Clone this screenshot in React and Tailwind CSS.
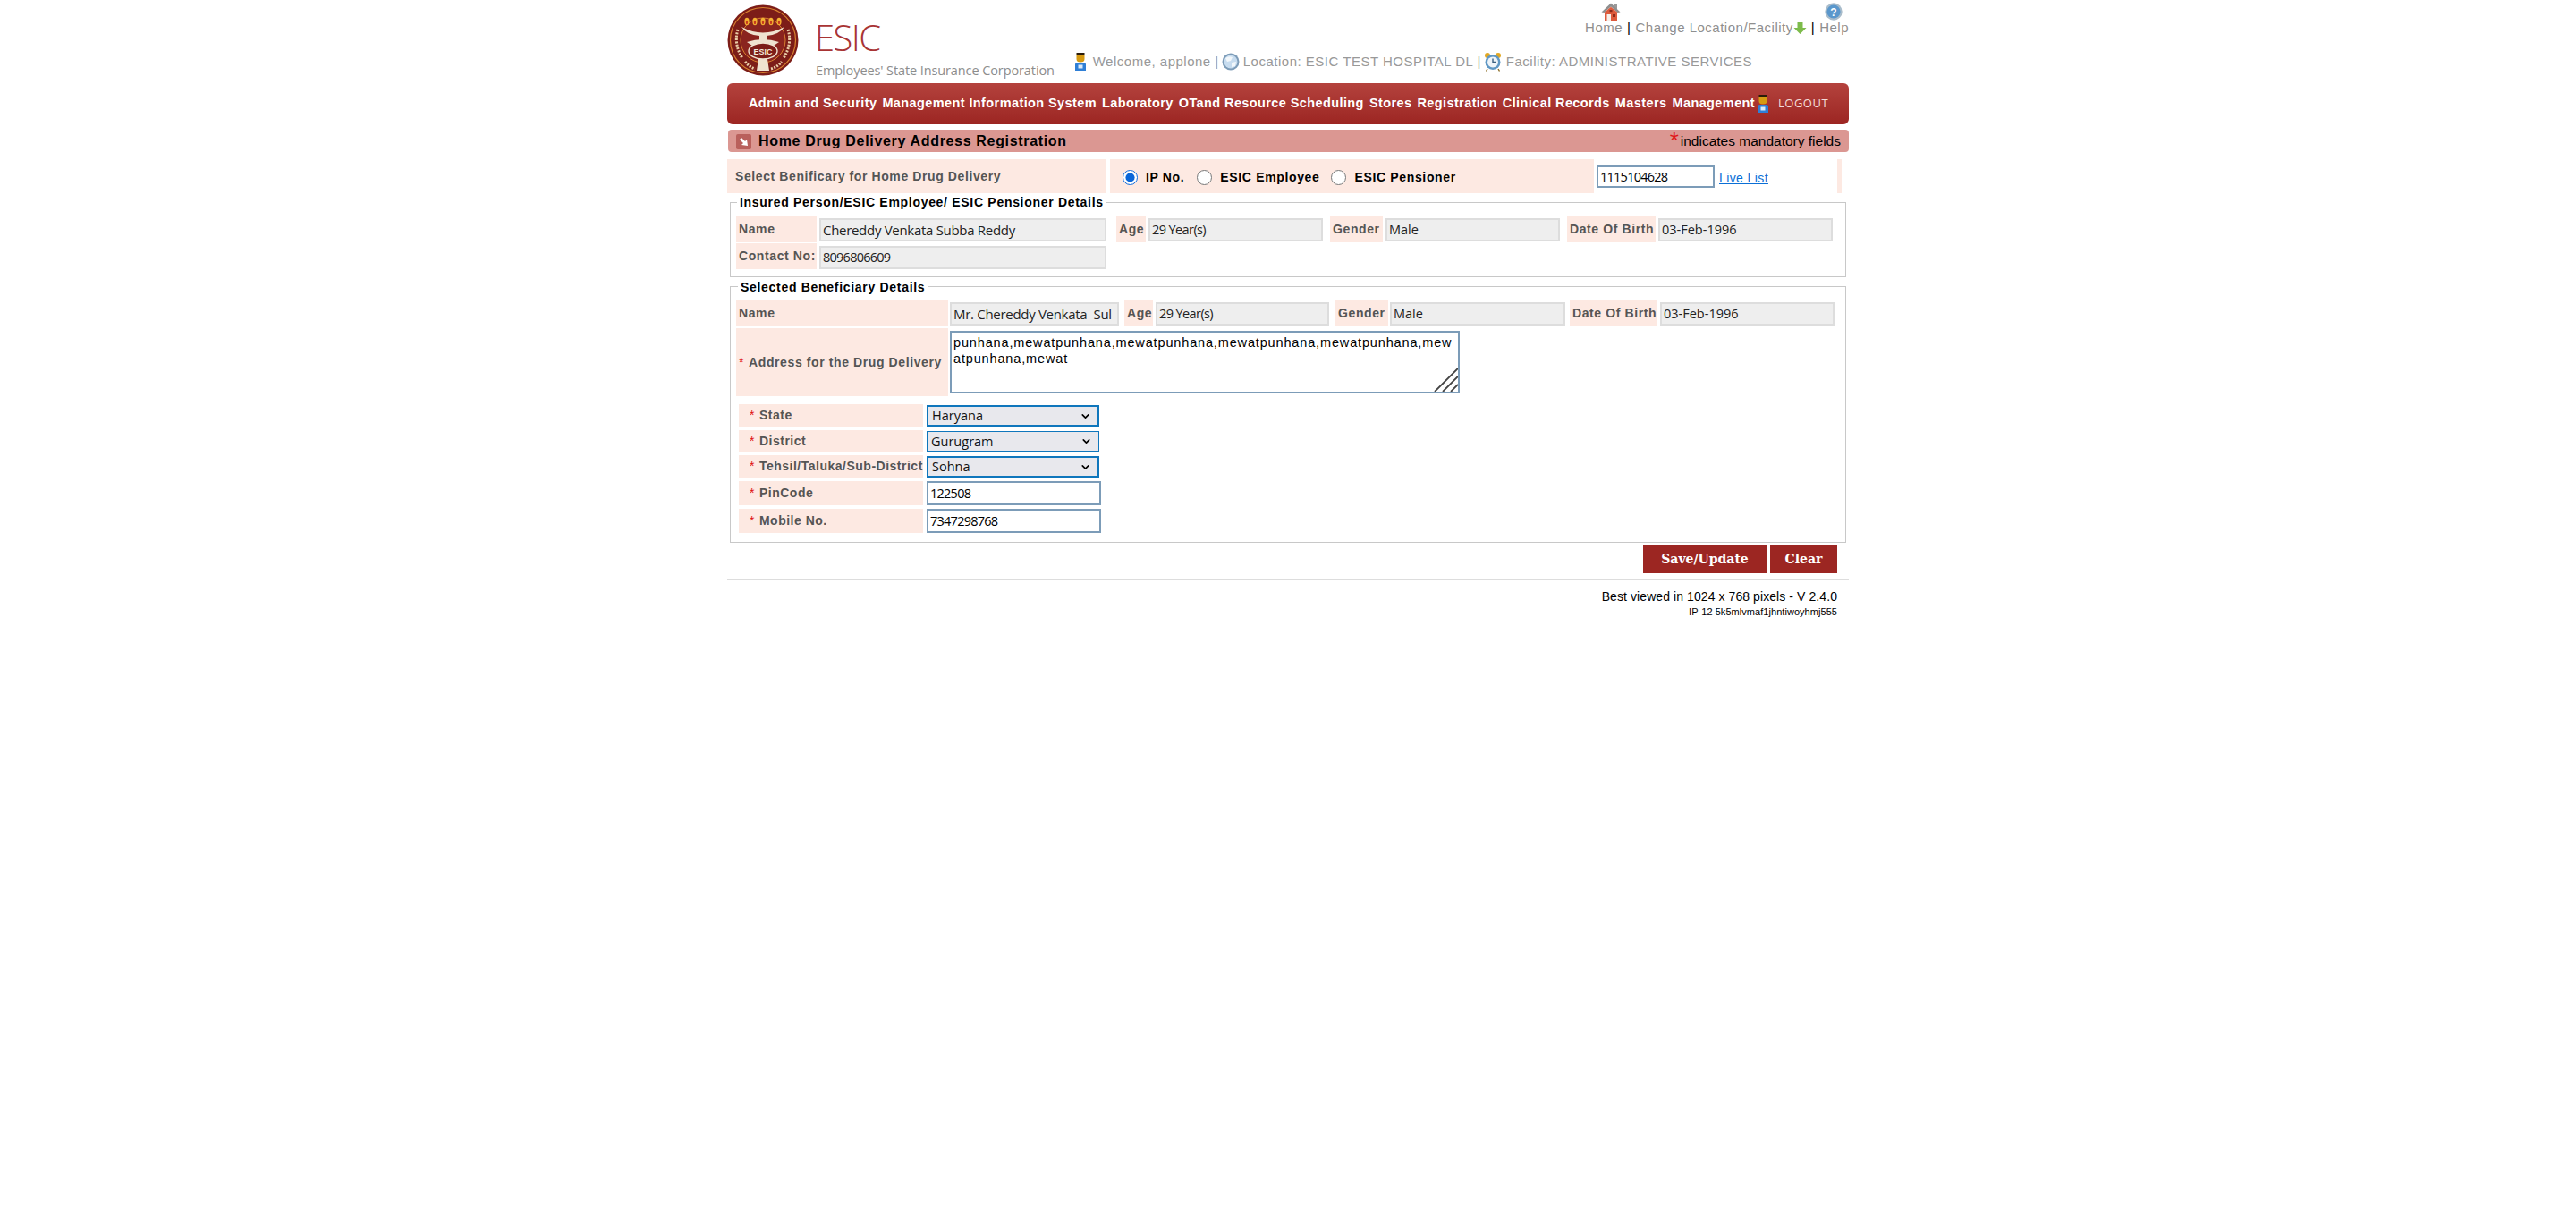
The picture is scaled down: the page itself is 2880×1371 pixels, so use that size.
import { ChevronDown } from 'lucide-react'

const sans = "font-['Liberation_Sans',Arial,sans-serif]"

function EsicLogo() {
  return (
    <svg viewBox="0 0 80 80" className="h-[80px] w-[80px]">
      <circle cx="40" cy="40" r="39.5" fill="#7c1d18" />
      <circle cx="40" cy="40" r="36.5" fill="none" stroke="#d9822f" strokeWidth="1.2" />
      <circle cx="40" cy="40" r="25" fill="#8a241e" stroke="#d9822f" strokeWidth="1" />
      {[22, 31, 40, 49, 58].map((x) => (
        <g key={x}>
          <ellipse cx={x} cy="19" rx="2.6" ry="4.2" fill="#f4b233" />
          <ellipse cx={x} cy="20" rx="1.2" ry="2.2" fill="#c63c1c" />
        </g>
      ))}
      <path d="M16 25 Q40 38 64 25 Q58 34 44 35 L44 40 L36 40 L36 35 Q22 34 16 25Z" fill="#efe3d0" />
      <path d="M22 42 Q40 36 58 42 L52 46 Q40 42 28 46Z" fill="#efe3d0" />
      <ellipse cx="40" cy="52" rx="16" ry="9" fill="#7c1d18" stroke="#efe3d0" strokeWidth="1.4" />
      <text x="40" y="56" textAnchor="middle" fontSize="9" fontWeight="700" fill="#f3e8d8" fontFamily="Liberation Sans">ESIC</text>
      <path d="M35 61 L45 61 L47 74 L33 74Z" fill="#efe3d0" />
      <path d="M12 28 Q7 44 17 60" fill="none" stroke="#e9cfa8" strokeWidth="3" strokeDasharray="2 1.4" />
      <path d="M68 28 Q73 44 63 60" fill="none" stroke="#e9cfa8" strokeWidth="3" strokeDasharray="2 1.4" />
      <path d="M20 64 Q25 70 31 72" fill="none" stroke="#e9cfa8" strokeWidth="3" strokeDasharray="2 1.4" />
      <path d="M49 72 Q56 70 61 64" fill="none" stroke="#e9cfa8" strokeWidth="3" strokeDasharray="2 1.4" />
    </svg>
  )
}

function HomeIcon() {
  return (
    <svg viewBox="0 0 22 20" className="h-[20px] w-[22px]">
      <rect x="15" y="1.5" width="3" height="6" fill="#9a9a9a" />
      <path d="M11 0.5 L21.5 10.5 L18.5 11 L11 4.5 L3.5 11 L0.5 10.5Z" fill="#8f8f8f" />
      <path d="M4 10.5 L11 4.8 L18 10.5 L18 20 L4 20Z" fill="#dd5a3c" />
      <rect x="6.5" y="13" width="4.5" height="7" fill="#f6eee8" />
      <rect x="13" y="13" width="3" height="3" fill="#8e2b1a" />
      <rect x="9.5" y="8" width="3" height="2.2" fill="#8e2b1a" />
    </svg>
  )
}

function HelpIcon() {
  return (
    <svg viewBox="0 0 20 20" className="h-[20px] w-[20px]">
      <circle cx="10" cy="10" r="9.7" fill="#a9bccb" />
      <circle cx="10" cy="10" r="7.6" fill="#5a97cc" />
      <text x="10" y="14.5" textAnchor="middle" fontSize="12" fontWeight="700" fill="#fff" fontFamily="Liberation Sans">?</text>
    </svg>
  )
}

function DownArrow() {
  return (
    <svg viewBox="0 0 15 15" className="h-[15px] w-[15px] shrink-0">
      <path d="M4.5 1 H10.5 V7 H14.5 L7.5 14 L0.5 7 H4.5Z" fill="#7dbb4b" />
    </svg>
  )
}

function UserIcon({ className }) {
  return (
    <svg viewBox="0 0 14 22" className={className}>
      <rect x="2.5" y="1" width="9" height="3" fill="#2a1c0a" />
      <path d="M2.5 3 H11.5 V8 Q11.5 11.5 7 11.5 Q2.5 11.5 2.5 8Z" fill="#d69a12" />
      <path d="M1 14 Q1 12 4 12 H10 Q13 12 13 14 V21 H1Z" fill="#2f7fd6" />
      <rect x="4.5" y="14.5" width="5" height="4" fill="#dcebfa" />
    </svg>
  )
}

function GlobeIcon() {
  return (
    <svg viewBox="0 0 20 20" className="h-[20px] w-[20px] shrink-0">
      <circle cx="10" cy="10" r="9.5" fill="#7d9cb8" />
      <circle cx="10" cy="10" r="7.5" fill="#c7dcef" />
      <path d="M4 6 Q8 3 12 5 L10 9 L6 10Z" fill="#f2f7fb" />
      <path d="M11 11 L16 10 L15 15 L11 16Z" fill="#f2f7fb" />
    </svg>
  )
}

function ClockIcon() {
  return (
    <svg viewBox="0 0 20 22" className="h-[22px] w-[20px] shrink-0">
      <circle cx="4" cy="4" r="3" fill="#e2a823" />
      <circle cx="16" cy="4" r="3" fill="#e2a823" />
      <circle cx="10" cy="11.5" r="8.5" fill="#5f97c4" />
      <circle cx="10" cy="11.5" r="6" fill="#eef4f9" />
      <path d="M10 7.5 V11.5 H13" fill="none" stroke="#3a5f80" strokeWidth="1.4" />
      <path d="M4 19 L2.5 21.5 M16 19 L17.5 21.5" stroke="#8a6a20" strokeWidth="1.4" />
    </svg>
  )
}

function TitleIcon() {
  return (
    <svg viewBox="0 0 17 17" className="h-[17px] w-[17px] shrink-0">
      <rect width="17" height="17" rx="2" fill="#b9605c" />
      <path d="M4 6 L6 4 L10 8 L12 6 L13 13 L6 12 L8 10Z" fill="#fff" />
    </svg>
  )
}

function Label({ className = '', children }) {
  return (
    <div className={`flex shrink-0 items-center bg-[#fde9e2] pl-[3px] text-[14px] font-bold tracking-[0.6px] text-[#555] ${className}`}>
      {children}
    </div>
  )
}

function ReadOnly({ className = '', children }) {
  return (
    <div className={`flex h-[26px] shrink-0 items-center whitespace-pre border-2 border-[#ddd] bg-[#eee] pl-[2px] font-['Open_Sans',sans-serif] text-[14.5px] text-[#222] ${className}`}>
      {children}
    </div>
  )
}

function Req() {
  return <span className="mr-[5px] font-normal text-[#e01010]">*</span>
}

function Legend({ className = '', children }) {
  return (
    <div className={`absolute bg-white px-[3px] text-[14px] font-bold tracking-[0.7px] text-black ${className}`}>
      {children}
    </div>
  )
}

function SelectBox({ className = '', children }) {
  return (
    <div className={`flex w-[193px] items-center justify-between border-[#0f76bc] bg-[#e8e8ed] pl-[4px] pr-[7px] font-['Open_Sans',sans-serif] text-[14.5px] text-[#111] ${className}`}>
      {children}
      <ChevronDown className="h-[13px] w-[13px] text-black" strokeWidth={3} />
    </div>
  )
}

function Radio({ checked, label, className = '' }) {
  return (
    <label className={`flex items-center gap-[9px] ${className}`}>
      <input type="radio" name="ben" defaultChecked={checked} className="m-0 h-[17px] w-[17px] accent-[#0a66d8]" />
      <span className="text-[14px] font-bold tracking-[0.65px] text-black">{label}</span>
    </label>
  )
}

function FormRow({ label, children, className = '' }) {
  return (
    <div className={`flex items-stretch gap-[4px] ${className}`}>
      <div className="flex w-[206px] shrink-0 items-center whitespace-nowrap bg-[#fde9e2] pl-[12px] text-[14px] font-bold tracking-[0.5px] text-[#555]">
        <Req />
        {label}
      </div>
      {children}
    </div>
  )
}

function TextBox({ children }) {
  return (
    <div className="flex w-[195px] items-center border-2 border-[#7c9cb8] bg-white pl-[2px] font-['Open_Sans',sans-serif] text-[14.5px] tracking-[-0.75px] text-black">
      {children}
    </div>
  )
}

export default function App() {
  return (
    <div className={`min-h-[1371px] bg-white ${sans}`}>
      <div className="mx-auto w-[1254px]">
        {/* Header */}
        <div className="flex h-[93px] pt-[5px]">
          <EsicLogo />
          <div className="ml-[19px] flex w-[268px] shrink-0 flex-col">
            <div className="ml-[-1px] mt-[12px] font-['Open_Sans',sans-serif] text-[40px] font-light leading-[50px] tracking-[-1.6px] text-[#a83434]">ESIC</div>
            <div className="mt-[3px] whitespace-nowrap font-['Open_Sans',sans-serif] text-[14.5px] leading-[18px] tracking-[-0.1px] text-[#8d8d8d]">
              Employees' State Insurance Corporation
            </div>
          </div>
          <div className="flex flex-1 flex-col items-end">
            <div className="flex w-full justify-end pr-[7px]">
              <div className="mr-[228px] mt-[-2px]"><HomeIcon /></div>
              <div className="mt-[-2px]"><HelpIcon /></div>
            </div>
            <div className="mt-[-1px] flex items-center whitespace-nowrap text-[15px] leading-[18px] tracking-[0.5px] text-[#8f8f8f]">
              Home<span className="mx-[5px] text-black">|</span>Change Location/Facility<DownArrow /><span className="mx-[5px] text-black">|</span>Help
            </div>
            <div className="mr-[108px] mt-[18px] flex items-center whitespace-nowrap text-[15px] leading-[22px] tracking-[0.5px] text-[#999]">
              <UserIcon className="mr-[7px] h-[22px] w-[14px] shrink-0" />
              Welcome, applone |<span className="w-[3px]" /><GlobeIcon /><span className="w-[4px]" />Location: ESIC TEST HOSPITAL DL |<span className="w-[3px]" /><ClockIcon /><span className="w-[5px]" />Facility: ADMINISTRATIVE SERVICES
            </div>
          </div>
        </div>

        {/* Nav */}
        <div className="flex h-[46px] items-center whitespace-nowrap rounded-[6px] bg-gradient-to-b from-[#b4423d] to-[#9c2522] pl-[24px] text-[14.5px] font-bold tracking-[0.4px] text-white">
          <div className="flex w-[1126px] gap-[6px]">
            {['Admin and Security', 'Management Information System', 'Laboratory', 'OTand Resource Scheduling', 'Stores', 'Registration', 'Clinical Records', 'Masters', 'Management'].map((m) => (
              <span key={m}>{m}</span>
            ))}
          </div>
          <UserIcon className="ml-[1px] h-[22px] w-[14px] shrink-0" />
          <span className="ml-[10px] font-['Open_Sans',sans-serif] text-[13px] font-normal tracking-[0.5px] text-[#f3dcd8]">LOGOUT</span>
        </div>

        {/* Title */}
        <div className="ml-[1px] mt-[6px] flex h-[25px] items-center justify-between rounded-[4px] bg-[#db9792] pl-[9px] pr-[9px] pt-[1px]">
          <div className="flex items-center gap-[8px] text-[16px] font-bold tracking-[0.67px] text-black">
            <TitleIcon />
            Home Drug Delivery Address Registration
          </div>
          <div className="flex items-center text-[15.5px] text-black">
            <span className="mr-[2px] mt-[-3px] text-[26px] leading-[14px] text-[#e01818]">*</span>
            indicates mandatory fields
          </div>
        </div>

        {/* Beneficiary selector */}
        <div className="mt-[8px] flex h-[38px] items-stretch">
          <Label className="w-[423px] pl-[9px] tracking-[0.6px]">Select Benificary for Home Drug Delivery</Label>
          <div className="ml-[5px] flex w-[541px] items-center bg-[#fde9e2] pl-[14px] pt-[2px]">
            <Radio checked label="IP No." />
            <Radio label="ESIC Employee" className="ml-[14px]" />
            <Radio label="ESIC Pensioner" className="ml-[13px]" />
          </div>
          <div className="ml-[3px] mt-[7px] flex h-[25px] w-[132px] items-center border-2 border-[#7c9cb8] bg-white pl-[2px] font-['Open_Sans',sans-serif] text-[14.5px] tracking-[-0.75px] text-black">1115104628</div>
          <a className="ml-[5px] mt-[11px] text-[14px] tracking-[0.4px] text-[#0b6fd6] underline">Live List</a>
          <div className="ml-[77px] w-[5px] bg-[#fde9e2]" />
        </div>

        {/* Insured person */}
        <div className="relative ml-[3px] mt-[10px] h-[84px] w-[1248px] border border-[#c8c8c8] px-[6px] pt-[15px]">
          <Legend className="left-[7px] top-[-11px]">Insured Person/ESIC Employee/ ESIC Pensioner Details</Legend>
          <div className="flex items-start">
            <Label className="h-[29px] w-[90px]">Name</Label>
            <ReadOnly className="ml-[3px] mt-[2px] w-[321px] text-[15px] tracking-[-0.3px]">Chereddy Venkata Subba Reddy</ReadOnly>
            <Label className="ml-[11px] h-[29px] w-[33px]">Age</Label>
            <ReadOnly className="ml-[3px] mt-[2px] w-[195px] tracking-[-0.6px]">29 Year(s)</ReadOnly>
            <Label className="ml-[8px] h-[29px] w-[59px]">Gender</Label>
            <ReadOnly className="ml-[3px] mt-[2px] w-[195px]">Male</ReadOnly>
            <Label className="ml-[8px] h-[29px] w-[99px]">Date Of Birth</Label>
            <ReadOnly className="ml-[3px] mt-[2px] w-[195px]">03-Feb-1996</ReadOnly>
          </div>
          <div className="mt-[1px] flex items-start">
            <Label className="h-[29px] w-[90px]">Contact No:</Label>
            <ReadOnly className="ml-[3px] mt-[3px] w-[321px] tracking-[-0.75px]">8096806609</ReadOnly>
          </div>
        </div>

        {/* Selected beneficiary */}
        <div className="relative ml-[3px] mt-[10px] h-[287px] w-[1248px] border border-[#c8c8c8] px-[6px] pt-[15px]">
          <Legend className="left-[8px] top-[-10px]">Selected Beneficiary Details</Legend>
          <div className="flex items-start">
            <Label className="h-[29px] w-[237px]">Name</Label>
            <ReadOnly className="ml-[2px] mt-[2px] w-[189px] text-[15px] tracking-[-0.3px]">Mr. Chereddy Venkata  Sul</ReadOnly>
            <Label className="ml-[6px] h-[29px] w-[32px]">Age</Label>
            <ReadOnly className="ml-[3px] mt-[2px] w-[194px] tracking-[-0.6px]">29 Year(s)</ReadOnly>
            <Label className="ml-[7px] h-[29px] w-[59px]">Gender</Label>
            <ReadOnly className="ml-[2px] mt-[2px] w-[196px]">Male</ReadOnly>
            <Label className="ml-[5px] h-[29px] w-[98px]">Date Of Birth</Label>
            <ReadOnly className="ml-[3px] mt-[2px] w-[195px]">03-Feb-1996</ReadOnly>
          </div>
          <div className="mt-[2px] flex items-start">
            <Label className="h-[76px] w-[237px]"><Req />Address for the Drug Delivery</Label>
            <div className="relative ml-[2px] mt-[3px] h-[70px] w-[570px] border-2 border-[#7c9cb8] bg-white pl-[2px] pt-[2px] text-[14.5px] leading-[18px] tracking-[0.85px] text-black [word-break:break-all]">
              punhana,mewatpunhana,mewatpunhana,mewatpunhana,mewatpunhana,mewatpunhana,mewat
              <svg viewBox="0 0 28 28" className="absolute bottom-0 right-0 h-[28px] w-[28px]">
                <path d="M2 28 L28 2 M11 28 L28 11 M20 28 L28 20" stroke="#444" strokeWidth="1.8" />
              </svg>
            </div>
          </div>
          <div className="ml-[3px] mt-[9px] flex flex-col">
            <FormRow label="State" className="h-[25px]">
              <SelectBox className="mt-[1px] border-2">Haryana</SelectBox>
            </FormRow>
            <FormRow label="District" className="mt-[4px] h-[24px]">
              <SelectBox className="mt-[1px] border">Gurugram</SelectBox>
            </FormRow>
            <FormRow label="Tehsil/Taluka/Sub-District" className="mt-[4px] h-[25px]">
              <SelectBox className="mt-[1px] border-2">Sohna</SelectBox>
            </FormRow>
            <FormRow label="PinCode" className="mt-[4px] h-[27px]">
              <TextBox>122508</TextBox>
            </FormRow>
            <FormRow label="Mobile No." className="mt-[4px] h-[27px]">
              <TextBox>7347298768</TextBox>
            </FormRow>
          </div>
        </div>

        {/* Actions */}
        <div className="mr-[13px] mt-[3px] flex justify-end gap-[4px] font-['DejaVu_Serif',serif] text-[14px] font-bold text-white">
          <button className="h-[31px] w-[138px] bg-[#9c2622]">Save/Update</button>
          <button className="h-[31px] w-[75px] bg-[#9c2622]">Clear</button>
        </div>

        {/* Footer */}
        <div className="mt-[6px] border-t-2 border-[#ddd] pr-[13px] pt-[9px] text-right">
          <div className="text-[14px] leading-[18px] tracking-[0.08px] text-black">Best viewed in 1024 x 768 pixels - V 2.4.0</div>
          <div className="mt-[1px] text-[11px] leading-[14px] tracking-[0.05px] text-black">IP-12 5k5mlvmaf1jhntiwoyhmj555</div>
        </div>
      </div>
    </div>
  )
}
